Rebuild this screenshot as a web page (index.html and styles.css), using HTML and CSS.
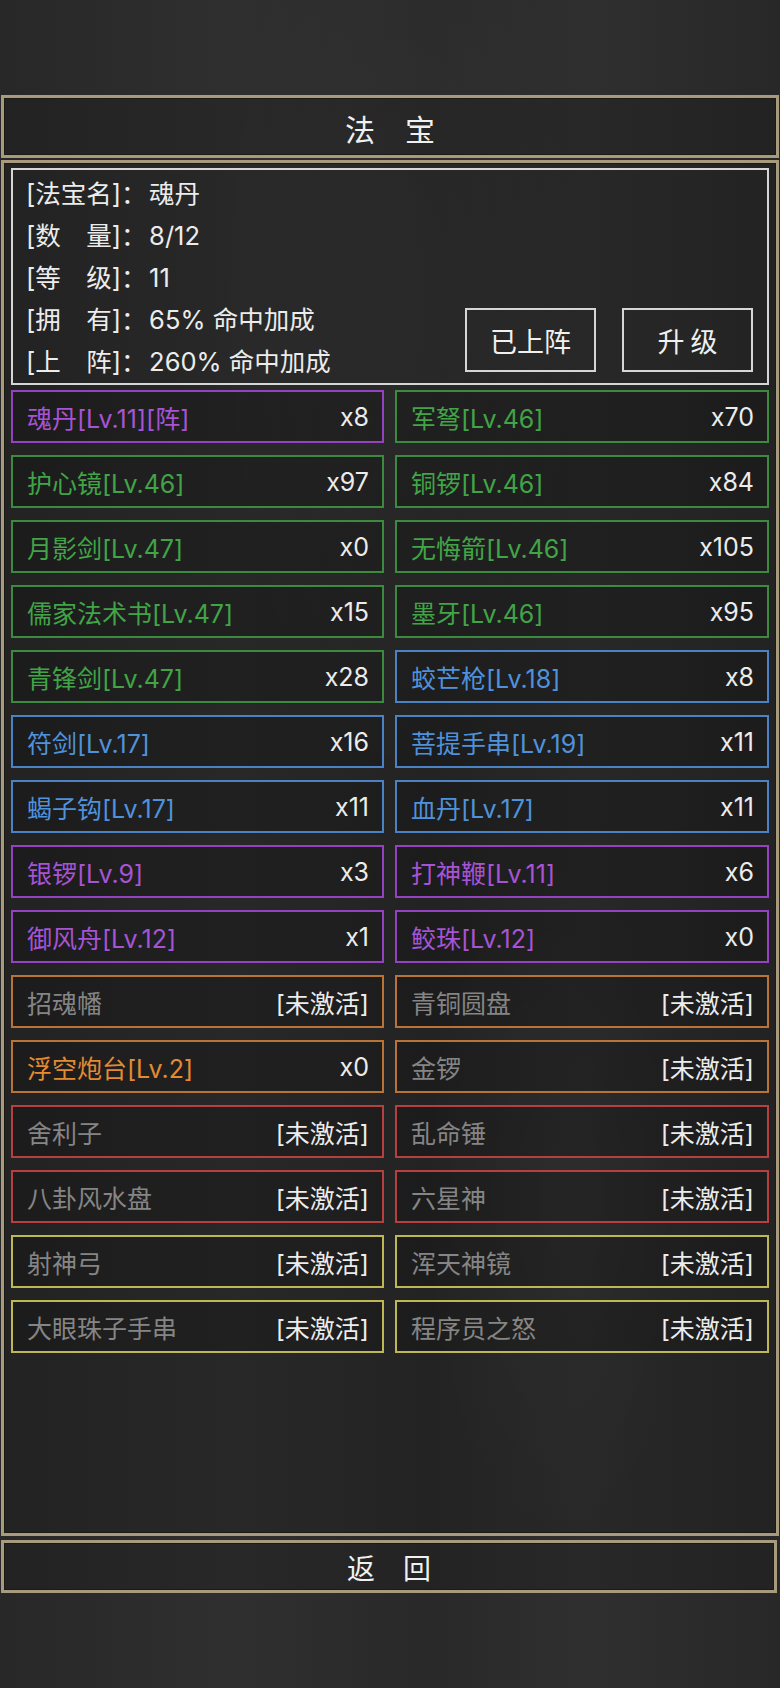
FILE: index.html
```html
<!DOCTYPE html>
<html lang="zh-CN">
<head>
<meta charset="utf-8">
<title>法宝</title>
<link rel="stylesheet" href="styles.css">
</head>
<body>
<div class="screen">
  <div class="frame title-bar"><span class="title">法　宝</span></div>

  <div class="frame panel">
    <div class="info">
      <div class="info-lines">
        <div class="line"><span class="key">[法宝名]</span><span class="colon">：</span>魂丹</div>
        <div class="line"><span class="key">[数　量]</span><span class="colon">：</span>8/12</div>
        <div class="line"><span class="key">[等　级]</span><span class="colon">：</span>11</div>
        <div class="line"><span class="key">[拥　有]</span><span class="colon">：</span>65% 命中加成</div>
        <div class="line"><span class="key">[上　阵]</span><span class="colon">：</span>260% 命中加成</div>
      </div>
      <div class="actions">
        <div class="btn">已上阵</div>
        <div class="btn">升 级</div>
      </div>
    </div>

    <div class="grid">
      <div class="cell purple"><span class="name">魂丹[Lv.11][阵]</span><span class="count">x8</span></div>
      <div class="cell green"><span class="name">军弩[Lv.46]</span><span class="count">x70</span></div>

      <div class="cell green"><span class="name">护心镜[Lv.46]</span><span class="count">x97</span></div>
      <div class="cell green"><span class="name">铜锣[Lv.46]</span><span class="count">x84</span></div>

      <div class="cell green"><span class="name">月影剑[Lv.47]</span><span class="count">x0</span></div>
      <div class="cell green"><span class="name">无悔箭[Lv.46]</span><span class="count">x105</span></div>

      <div class="cell green"><span class="name">儒家法术书[Lv.47]</span><span class="count">x15</span></div>
      <div class="cell green"><span class="name">墨牙[Lv.46]</span><span class="count">x95</span></div>

      <div class="cell green"><span class="name">青锋剑[Lv.47]</span><span class="count">x28</span></div>
      <div class="cell blue"><span class="name">蛟芒枪[Lv.18]</span><span class="count">x8</span></div>

      <div class="cell blue"><span class="name">符剑[Lv.17]</span><span class="count">x16</span></div>
      <div class="cell blue"><span class="name">菩提手串[Lv.19]</span><span class="count">x11</span></div>

      <div class="cell blue"><span class="name">蝎子钩[Lv.17]</span><span class="count">x11</span></div>
      <div class="cell blue"><span class="name">血丹[Lv.17]</span><span class="count">x11</span></div>

      <div class="cell purple"><span class="name">银锣[Lv.9]</span><span class="count">x3</span></div>
      <div class="cell purple"><span class="name">打神鞭[Lv.11]</span><span class="count">x6</span></div>

      <div class="cell purple"><span class="name">御风舟[Lv.12]</span><span class="count">x1</span></div>
      <div class="cell purple"><span class="name">鲛珠[Lv.12]</span><span class="count">x0</span></div>

      <div class="cell orange off"><span class="name">招魂幡</span><span class="count">[未激活]</span></div>
      <div class="cell orange off"><span class="name">青铜圆盘</span><span class="count">[未激活]</span></div>

      <div class="cell orange"><span class="name">浮空炮台[Lv.2]</span><span class="count">x0</span></div>
      <div class="cell orange off"><span class="name">金锣</span><span class="count">[未激活]</span></div>

      <div class="cell red off"><span class="name">舍利子</span><span class="count">[未激活]</span></div>
      <div class="cell red off"><span class="name">乱命锤</span><span class="count">[未激活]</span></div>

      <div class="cell red off"><span class="name">八卦风水盘</span><span class="count">[未激活]</span></div>
      <div class="cell red off"><span class="name">六星神</span><span class="count">[未激活]</span></div>

      <div class="cell yellow off"><span class="name">射神弓</span><span class="count">[未激活]</span></div>
      <div class="cell yellow off"><span class="name">浑天神镜</span><span class="count">[未激活]</span></div>

      <div class="cell yellow off"><span class="name">大眼珠子手串</span><span class="count">[未激活]</span></div>
      <div class="cell yellow off"><span class="name">程序员之怒</span><span class="count">[未激活]</span></div>
    </div>
  </div>

  <div class="frame back-bar"><span class="back">返　回</span></div>
</div>
</body>
</html>
```

FILE: styles.css
```css
* { box-sizing: border-box; }

html, body {
  margin: 0;
  padding: 0;
}

body {
  width: 780px;
  height: 1688px;
  overflow: hidden;
  background-color: #2b2b2b;
  background-image:
    radial-gradient(ellipse 260px 700px at 400px 300px, rgba(255,255,255,0.035), rgba(255,255,255,0) 70%),
    radial-gradient(ellipse 200px 500px at 560px 1200px, rgba(255,255,255,0.03), rgba(255,255,255,0) 70%),
    linear-gradient(90deg, rgba(0,0,0,0.08), rgba(255,255,255,0.02) 30%, rgba(0,0,0,0.05) 55%, rgba(255,255,255,0.02) 75%, rgba(0,0,0,0.08));
  font-family: "Inter", "Noto Sans CJK SC", sans-serif;
  color: #e6e6e6;
  text-spacing-trim: space-all;
}

.screen {
  display: flex;
  flex-direction: column;
  padding-top: 95px;
}

.frame {
  border: 3px solid #a89a7d;
  box-shadow: inset 0 0 0 1px #1c1a16;
  background: rgba(20, 20, 20, 0.25);
}

.title-bar {
  height: 63px;
  margin: 0 1px 0 1px;
  display: flex;
  align-items: center;
  justify-content: center;
}

.title {
  font-family: "Noto Sans CJK SC", sans-serif;
  font-size: 30px;
  line-height: 1;
  color: #f0f0f0;
  padding-top: 2px;
}

.panel {
  margin: 2px 1px 0 1px;
  height: 1376px;
  padding: 5px 7px 0 7px;
  display: flex;
  flex-direction: column;
  gap: 5px;
}

.info {
  border: 2px solid #d6d6d6;
  height: 217px;
  padding: 1px 14px 0 13px;
  display: flex;
  justify-content: space-between;
}

.info-lines {
  display: flex;
  flex-direction: column;
}

.line {
  font-size: 25.5px;
  line-height: 42px;
  height: 42px;
  white-space: nowrap;
  color: #ececec;
}

.line .colon {
  display: inline-block;
  width: 28px;
  font-family: "Noto Sans CJK SC", sans-serif;
}

.actions {
  align-self: flex-end;
  display: flex;
  gap: 26px;
  margin-bottom: 11px;
}

.btn {
  width: 131px;
  height: 64px;
  border: 2px solid #d6d6d6;
  display: flex;
  align-items: center;
  justify-content: center;
  font-family: "Noto Sans CJK SC", sans-serif;
  font-size: 27px;
  color: #f0f0f0;
}

.grid {
  display: grid;
  grid-template-columns: 373px 374px;
  grid-auto-rows: 53px;
  column-gap: 11px;
  row-gap: 12px;
}

.cell {
  border: 2px solid;
  background: rgba(0, 0, 0, 0.18);
  display: flex;
  align-items: center;
  justify-content: space-between;
  padding: 0 13px 0 14px;
  font-size: 25px;
  white-space: nowrap;
}

.cell .count {
  color: #ececec;
}

.purple { border-color: #9442c2; }
.purple .name { color: #a653d6; }

.green { border-color: #3c8a3e; }
.green .name { color: #41a447; }

.blue { border-color: #4a82c4; }
.blue .name { color: #4f92dc; }

.orange { border-color: #b97336; }
.orange .name { color: #e48b32; }

.red { border-color: #b5403f; }

.yellow { border-color: #bdb854; }

.off .name { color: #858585; }

.back-bar {
  margin: 4px 3px 0 1px;
  height: 53px;
  display: flex;
  align-items: center;
  justify-content: center;
}

.back {
  font-family: "Noto Sans CJK SC", sans-serif;
  font-size: 28px;
  line-height: 1;
  color: #f0f0f0;
}
```
